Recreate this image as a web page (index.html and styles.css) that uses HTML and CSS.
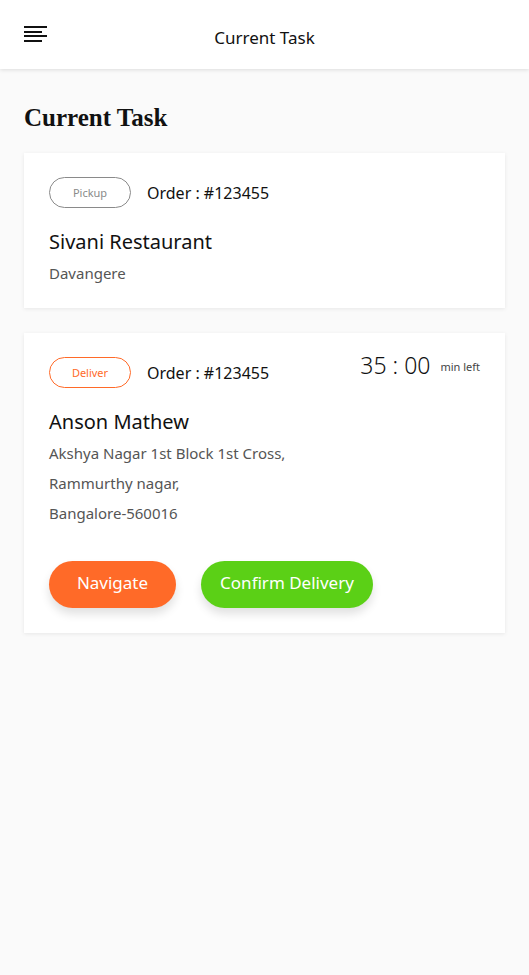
FILE: index.html
```html
<!DOCTYPE html>
<html lang="en">
<head>
    <meta charset="UTF-8">
    <meta name="viewport" content="width=device-width, initial-scale=1.0">
    <title>Current Task</title>
    <link rel="stylesheet" href="styles.css">
</head>
<body>
    <header class="topbar">
        <button class="menu-btn" aria-label="Menu">
            <svg width="24" height="18" viewBox="0 0 24 18">
                <rect x="0" y="1" width="23" height="2" fill="#111"/>
                <rect x="0" y="6" width="18" height="2" fill="#111"/>
                <rect x="0" y="10" width="23" height="2" fill="#111"/>
                <rect x="0" y="15" width="18" height="2" fill="#111"/>
            </svg>
        </button>
        <div class="topbar-title">Current Task</div>
    </header>

    <main class="content">
        <h1 class="page-title">Current Task</h1>

        <div class="card">
            <div class="card-head">
                <span class="tag tag-pickup">Pickup</span>
                <span class="order">Order : #123455</span>
            </div>
            <div class="name">Sivani Restaurant</div>
            <div class="address">Davangere</div>
        </div>

        <div class="card card-deliver">
            <div class="card-head">
                <span class="tag tag-deliver">Deliver</span>
                <span class="order">Order : #123455</span>
                <span class="timer">35 : 00 <small>min left</small></span>
            </div>
            <div class="name">Anson Mathew</div>
            <div class="address">Akshya Nagar 1st Block 1st Cross,<br>Rammurthy nagar,<br>Bangalore-560016</div>
            <div class="actions">
                <button class="btn btn-navigate">Navigate</button>
                <button class="btn btn-confirm">Confirm Delivery</button>
            </div>
        </div>
    </main>
</body>
</html>
```

FILE: styles.css
```css
body {
    font-family: "Noto Sans", "Open Sans", sans-serif;
    background-color: #fafafa;
    margin: 0;
    color: #111;
}
.topbar {
    height: 69px;
    background-color: white;
    box-shadow: 0 1px 4px rgba(0, 0, 0, 0.12);
    display: flex;
    align-items: center;
    justify-content: center;
    position: relative;
}
.menu-btn {
    position: absolute;
    left: 24px;
    top: 25px;
    padding: 0;
    border: none;
    background: none;
    line-height: 0;
}
.topbar-title {
    font-size: 17px;
    margin-top: 5px;
}
.content {
    padding: 0 24px;
}
.page-title {
    font-family: "Liberation Serif", serif;
    font-weight: bold;
    font-size: 25px;
    margin: 34px 0 20px;
    line-height: 30px;
}
.card {
    background-color: white;
    box-shadow: 0 1px 4px rgba(0, 0, 0, 0.08);
    padding: 24px 24px 20px 25px;
    margin-bottom: 25px;
}
.card-deliver {
    padding-bottom: 25px;
}
.card-head {
    display: flex;
    align-items: center;
    height: 31px;
}
.tag {
    box-sizing: border-box;
    width: 82px;
    height: 31px;
    border-radius: 16px;
    font-size: 11px;
    display: flex;
    align-items: center;
    justify-content: center;
    margin-right: 16px;
}
.tag-pickup {
    border: 1.5px solid #8a8a8a;
    color: #8a8a8a;
}
.tag-deliver {
    border: 1.5px solid #ff6a28;
    color: #ff6a28;
}
.order {
    font-size: 16px;
}
.timer {
    margin-left: auto;
    font-size: 23px;
    font-weight: 300;
    align-self: flex-start;
    margin-top: -8px;
    margin-right: 1px;
}
.timer small {
    font-size: 11px;
    color: #444;
    font-weight: normal;
    margin-left: 4px;
    vertical-align: 3px;
}
.name {
    font-size: 20px;
    margin-top: 19px;
    line-height: 30px;
}
.address {
    font-size: 15px;
    color: #555;
    line-height: 30px;
    margin-top: 1px;
}
.actions {
    display: flex;
    gap: 25px;
    margin-top: 33px;
}
.btn {
    height: 47px;
    border: none;
    border-radius: 24px;
    color: white;
    font-family: inherit;
    font-size: 17px;
    padding: 0 0 5px;
    white-space: nowrap;
    box-shadow: 0 6px 10px rgba(0, 0, 0, 0.12);
}
.btn-navigate {
    background-color: #ff6a28;
    width: 127px;
}
.btn-confirm {
    background-color: #5bd016;
    width: 172px;
}
```
